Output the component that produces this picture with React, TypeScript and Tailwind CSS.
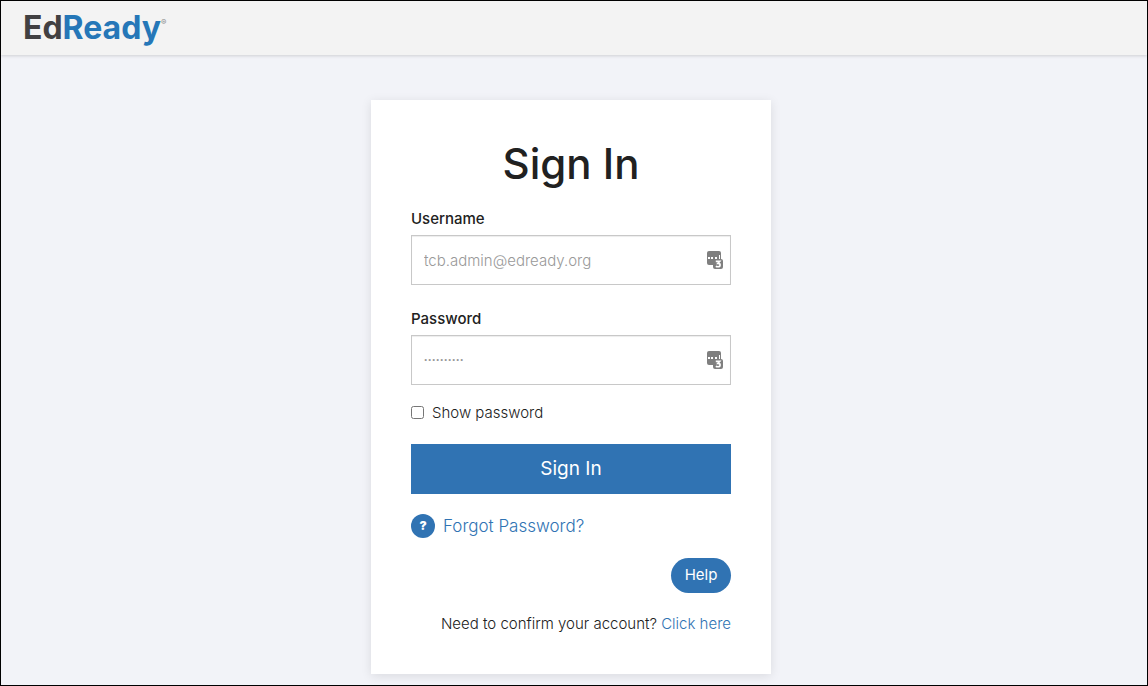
import { useState } from "react";

// Badge that a password manager puts at the end of a field
function VaultIcon() {
  return (
    <svg
      viewBox="0 0 16 18"
      className="pointer-events-none absolute right-2 top-4 h-[18px] w-4"
      aria-hidden="true"
    >
      <rect width="14" height="14" rx="2" fill="#7f7f7f" />
      <rect x="6" y="8" width="10" height="10" rx="2" fill="#7f7f7f" />
      <path fill="#fff" d="M1 6h2v2H1zM4 6h2v2H4zM8 6h2v2H8zM12 4h1v4h-1z" />
      <path
        fill="none"
        stroke="#fff"
        strokeWidth="1.6"
        d="M8.800 10.400h3.900l-1.800 2c1.400 0 2.200.6 2.200 1.600 0 1.200-1 1.800-2.300 1.800-.8 0-1.500-.2-2-.5"
      />
    </svg>
  );
}

function Field({
  id,
  label,
  type,
  placeholder,
  inputClass,
}: {
  id: string;
  label: string;
  type: string;
  placeholder: string;
  inputClass: string;
}) {
  return (
    <div>
      <label htmlFor={id} className="mb-1.5 block text-[15px] leading-5 font-medium">
        {label}
      </label>
      <div className="relative">
        <input
          id={id}
          type={type}
          placeholder={placeholder}
          className={`h-[50px] w-full border border-[#c8c8c8] bg-white px-3 font-light shadow-[inset_0_1px_1px_rgba(0,0,0,0.075)] outline-none placeholder:text-[#999] ${inputClass}`}
        />
        <VaultIcon />
      </div>
    </div>
  );
}

export default function App() {
  const [showPassword, setShowPassword] = useState(false);

  return (
    <div className="flex min-h-screen flex-col border border-black bg-[#f2f3f8] font-['Inter',sans-serif] text-[#212121]">
      {/* Header */}
      <header className="flex h-[54px] items-center bg-[#f3f3f3] pl-[22px] shadow-[0_1px_3px_rgba(0,0,0,0.15)]">
        <a href="#" className="flex items-start text-[32px] leading-10 font-bold text-[#414042]">
          <span>
            Ed<span className="text-[#2577b8]">Ready</span>
          </span>
          <span className="pt-2 text-[8px] leading-3 font-normal text-[#8a8a8a]">®</span>
        </a>
      </header>

      {/* Sign in card */}
      <main className="flex flex-1 justify-center pt-[45px] pr-1.5 pb-2.5">
        <form
          onSubmit={(e) => e.preventDefault()}
          className="w-full max-w-[400px] self-start bg-white p-10 shadow-[0_2px_10px_rgba(0,0,0,0.1)]"
        >
          <h1 className="mb-[21px] text-center text-[42px] leading-[48px] font-medium">
            Sign In
          </h1>

          <div className="flex flex-col gap-6">
            <Field
              id="username"
              label="Username"
              type="text"
              placeholder="tcb.admin@edready.org"
              inputClass="text-[15px]"
            />
            <Field
              id="password"
              label="Password"
              type={showPassword ? "text" : "password"}
              placeholder="··········"
              inputClass="font-['Liberation_Sans',sans-serif] text-xs placeholder:font-bold"
            />
          </div>

          <label className="mt-4 flex items-center gap-2 text-[15px] leading-[23px] font-light">
            <input
              type="checkbox"
              checked={showPassword}
              onChange={(e) => setShowPassword(e.target.checked)}
              className="h-[13px] w-[13px]"
            />
            Show password
          </label>

          <button
            type="submit"
            className="mt-5 h-[50px] w-full bg-[#3073b3] text-[19px] text-white"
          >
            Sign In
          </button>

          <a href="#" className="mt-5 flex items-center gap-2 text-[17px] leading-6 font-light text-[#3073b3]">
            <span className="flex h-6 w-6 items-center justify-center rounded-full bg-[#3073b3] text-xs font-black text-white">
              ?
            </span>
            Forgot Password?
          </a>

          <div className="mt-5 flex justify-end">
            <button
              type="button"
              className="h-[35px] w-[60px] rounded-full bg-[#3073b3] text-[15px] text-white"
            >
              Help
            </button>
          </div>

          <p className="mt-5 text-right text-[15px] leading-[21px] font-light">
            Need to confirm your account?{" "}
            <a href="#" className="text-[#3073b3]">
              Click here
            </a>
          </p>
        </form>
      </main>
    </div>
  );
}
